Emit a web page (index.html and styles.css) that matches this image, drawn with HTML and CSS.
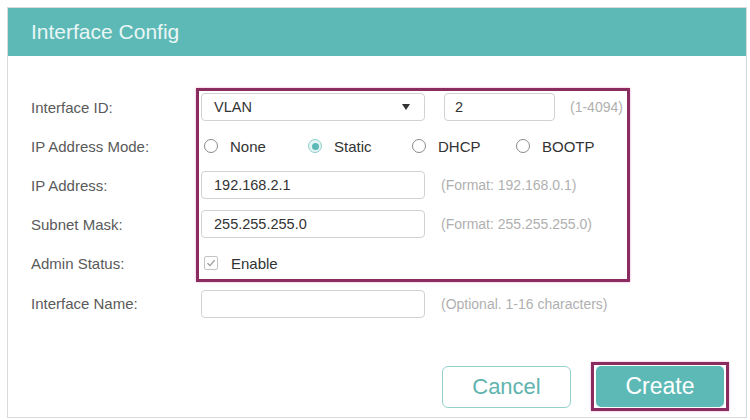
FILE: index.html
```html
<!DOCTYPE html>
<html lang="en">
<head>
<meta charset="utf-8">
<title>Interface Config</title>
<link rel="stylesheet" href="styles.css">
</head>
<body>
<div class="page">
  <div class="dialog">
    <div class="dialog-header">Interface Config</div>
    <div class="dialog-body">
      <div class="form">
        <div class="label r1">Interface ID:</div>
        <div class="control r1">
          <div class="select"><span>VLAN</span><span class="caret"></span></div>
          <div class="field num">2</div>
          <span class="hint hint-range">(1-4094)</span>
        </div>

        <div class="label r2">IP Address Mode:</div>
        <div class="control r2">
          <div class="radio-item"><span class="radio"></span><span>None</span></div>
          <div class="radio-item"><span class="radio checked"></span><span>Static</span></div>
          <div class="radio-item"><span class="radio"></span><span>DHCP</span></div>
          <div class="radio-item"><span class="radio"></span><span>BOOTP</span></div>
        </div>

        <div class="label r3">IP Address:</div>
        <div class="control r3">
          <div class="field wide">192.168.2.1</div>
          <span class="hint">(Format: 192.168.0.1)</span>
        </div>

        <div class="label r4">Subnet Mask:</div>
        <div class="control r4">
          <div class="field wide">255.255.255.0</div>
          <span class="hint">(Format: 255.255.255.0)</span>
        </div>

        <div class="label r5">Admin Status:</div>
        <div class="control r5">
          <span class="checkbox"><svg width="10" height="10" viewBox="0 0 10 10"><polyline points="1.5,5.2 4,7.6 8.6,2.2" fill="none" stroke="#9a9a9a" stroke-width="1.3"/></svg></span>
          <span class="check-label">Enable</span>
        </div>

        <div class="label r6">Interface Name:</div>
        <div class="control r6 end">
          <div class="field wide"></div>
          <span class="hint">(Optional. 1-16 characters)</span>
        </div>

        <div class="highlight"></div>
      </div>

      <div class="footer">
        <button class="btn btn-cancel">Cancel</button>
        <div class="btn-highlight"><button class="btn btn-create">Create</button></div>
      </div>
    </div>
  </div>
</div>
</body>
</html>
```

FILE: styles.css
```css
* { box-sizing: border-box; }

html, body {
  margin: 0;
  background: #ffffff;
  font-family: "Liberation Sans", Arial, sans-serif;
}

.page {
  padding: 7px 0 0 7px;
}

.dialog {
  width: 740px;
  height: 411px;
  border: 1px solid #dadada;
  background: #fff;
  display: flex;
  flex-direction: column;
}

.dialog-header {
  height: 48px;
  background: #5db9b6;
  color: #e9f6f5;
  font-size: 21px;
  padding-left: 23px;
  display: flex;
  align-items: center;
}

.dialog-body {
  padding: 37px 0 0 23px;
  display: flex;
  flex-direction: column;
}

.form {
  display: grid;
  grid-template-columns: 165px 434px;
  grid-template-rows: repeat(5, 28px) 30px;
  row-gap: 11px;
  align-items: center;
}

.label {
  grid-column: 1;
  font-size: 15px;
  color: #5a5a5a;
}

.control {
  grid-column: 2;
  padding-left: 5px;
  display: flex;
  align-items: center;
  height: 28px;
  font-size: 14px;
  color: #333;
}

.r1 { grid-row: 1; }
.r2 { grid-row: 2; }
.r3 { grid-row: 3; }
.r4 { grid-row: 4; }
.r5 { grid-row: 5; }
.r6 { grid-row: 6; }
.control.end { align-self: end; }

.highlight {
  grid-column: 2;
  grid-row: 1 / 6;
  align-self: stretch;
  margin: -5px 0;
  border: 3px solid #8a2c5f;
  box-shadow: 0 0 2px rgba(225, 130, 185, 0.7);
  pointer-events: none;
}

.select, .field {
  height: 28px;
  border: 1px solid #d2d2d2;
  border-radius: 4px;
  background: #fff;
  display: flex;
  align-items: center;
  padding-left: 12px;
  font-size: 14.5px;
  color: #333;
}

.select {
  width: 224px;
  justify-content: space-between;
  padding-right: 14px;
}

.caret {
  width: 0;
  height: 0;
  border-left: 4px solid transparent;
  border-right: 4px solid transparent;
  border-top: 6px solid #333;
}

.field.num {
  width: 111px;
  margin-left: 19px;
  padding-left: 10px;
}

.field.wide {
  width: 224px;
}

.hint {
  font-size: 14px;
  color: #b0b0b0;
  margin-left: 16px;
  white-space: nowrap;
}

.hint-range {
  margin-left: 15px;
}

.radio-item {
  width: 104px;
  display: flex;
  align-items: center;
  padding-left: 3px;
  font-size: 15px;
  color: #333;
}

.radio {
  width: 14px;
  height: 14px;
  border: 1px solid #8a8a8a;
  border-radius: 50%;
  margin-right: 12px;
  position: relative;
  flex: none;
}

.radio.checked {
  border-color: #8ccfcb;
  background: #e6f5f4;
}

.radio.checked::after {
  content: "";
  position: absolute;
  left: 2.5px;
  top: 2.5px;
  width: 7px;
  height: 7px;
  border-radius: 50%;
  background: #5db9b6;
}

.checkbox {
  width: 14px;
  height: 14px;
  margin-left: 3px;
  border: 1px solid #c4c4c4;
  border-radius: 2px;
  display: flex;
  align-items: center;
  justify-content: center;
  flex: none;
}

.check-label {
  margin-left: 13px;
  font-size: 15px;
  color: #333;
}

.footer {
  margin-top: 44px;
  display: flex;
  justify-content: flex-end;
  align-items: center;
  padding-right: 17px;
}

.btn {
  font-family: "Liberation Sans", Arial, sans-serif;
  font-size: 22px;
  cursor: pointer;
}

.btn-cancel {
  width: 129px;
  height: 42px;
  border: 1px solid #92d0cc;
  border-radius: 6px;
  background: #fff;
  color: #5fb4af;
  margin-right: 20px;
}

.btn-highlight {
  border: 3px solid #8a2c5f;
  padding: 1px 2px;
  box-shadow: 0 0 2px rgba(225, 130, 185, 0.7);
}

.btn-create {
  display: block;
  width: 128px;
  height: 41px;
  border: none;
  border-radius: 5px;
  background: #5db9b6;
  color: #fff;
  font-size: 23px;
}
```
